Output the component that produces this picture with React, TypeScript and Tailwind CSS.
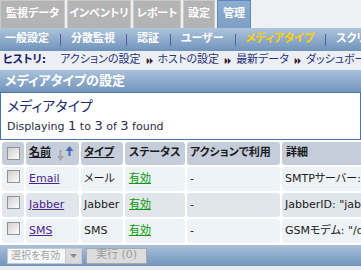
import { Fragment } from 'react';

const font = "font-['DejaVu_Sans','Noto_Sans_CJK_JP',sans-serif] [font-feature-settings:'palt']";

const tabs = [
  { label: '監視データ', w: 'w-[65px]' },
  { label: 'インベントリ', w: 'w-[64px]' },
  { label: 'レポート', w: 'w-[48px]' },
  { label: '設定', w: 'w-[32px]' },
];

const menu = ['一般設定', '分散監視', '認証', 'ユーザー', 'メディアタイプ', 'スクリプト'];

const history = ['アクションの設定', 'ホストの設定', '最新データ', 'ダッシュボード', 'アクションの設定'];

const rows = [
  { name: 'Email', type: 'メール', detail: 'SMTPサーバー: "localhost", SMTP helo: "localhost"', bg: 'bg-[#eef3f7]' },
  { name: 'Jabber', type: 'Jabber', detail: 'JabberID: "jabber@company.com"', bg: 'bg-[#e1e5ec]' },
  { name: 'SMS', type: 'SMS', detail: 'GSMモデム: "/dev/ttyS0"', bg: 'bg-[#eef3f7]' },
];

function Checkbox() {
  return (
    <span className="block w-[13px] h-[13px] border border-[#929292] bg-gradient-to-br from-[#cfcfcf] to-[#fcfcfc]" />
  );
}

function Raquo() {
  return (
    <svg width="7" height="6" viewBox="0 0 7 6" className="mx-[5px] shrink-0">
      <path d="M0 0l3 3-3 3z" fill="#f0a040" />
      <path d="M1 0l3 3-3 3z" fill="#1c2a7a" />
      <path d="M3 0l3 3-3 3z" fill="#f0a040" />
      <path d="M4 0l3 3-3 3z" fill="#1c2a7a" />
    </svg>
  );
}

function SortIcon() {
  return (
    <svg width="17" height="16" viewBox="0 0 17 16" className="ml-[6px]">
      <rect x="2.5" y="4" width="2" height="7" fill="#a6a6a6" />
      <path d="M0 10h7l-3.5 5z" fill="#a6a6a6" />
      <rect x="11.5" y="4" width="2" height="6" fill="#3f70b6" />
      <path d="M8.5 5h8l-4-5z" fill="#3f70b6" />
    </svg>
  );
}

export default function App() {
  return (
    <div className={`w-[361px] h-[270px] overflow-hidden bg-[#e8ebf0] ${font}`}>
      {/* main tabs */}
      <div className="flex h-[28px] gap-[2px] bg-[#eef0f3]">
        {tabs.map((t) => (
          <div
            key={t.label}
            className={`${t.w} flex items-center justify-center bg-[#b4b4b4] border border-b-0 border-[#c9c9c9] text-white font-bold text-[11px] whitespace-nowrap`}
          >
            {t.label}
          </div>
        ))}
        <div className="w-[34px] flex items-center justify-center bg-gradient-to-b from-[#8eacd0] to-[#7e9fc6] border border-b-0 border-[#5a8ac2] text-white font-bold text-[11px]">
          管理
        </div>
      </div>

      {/* sub menu */}
      <div className="flex items-center h-[23px] pl-[5px] bg-gradient-to-b from-[#aec4dc] to-[#7093bb] text-white font-bold text-[11px] whitespace-nowrap">
        {menu.map((m, i) => (
          <Fragment key={m}>
            {i > 0 && <span className="ml-[11px] mr-[10px] w-px h-[12px] bg-[#5d5da5] shrink-0" />}
            <span className={i === 4 ? 'text-[#ffd000]' : ''}>{m}</span>
          </Fragment>
        ))}
      </div>

      {/* history */}
      <div className="flex items-center h-[19px] pl-[3px] bg-[#eceff4] text-[11px] text-[#26327c] whitespace-nowrap">
        <span className="font-bold text-[#1a1a6e] mr-[14px]">ヒストリ:</span>
        {history.map((h, i) => (
          <Fragment key={i}>
            {i > 0 && <Raquo />}
            <span>{h}</span>
          </Fragment>
        ))}
      </div>

      {/* page title */}
      <div className="flex items-center h-[22px] pl-[5px] bg-gradient-to-b from-[#aac1da] to-[#7395bd] text-white font-bold text-[13px]">
        メディアタイプの設定
      </div>

      <div className="bg-white">
        <div className="h-[48px] border border-[#4777ae] pl-[6px] pt-[4px]">
          <div className="text-[14px] leading-[18px] text-[#1d2c6c]">メディアタイプ</div>
          <div className="mt-[4px] text-[11px] leading-[14px] text-[#2a2a48] whitespace-nowrap">
            Displaying <span className="text-[13px]">1</span> to <span className="text-[13px]">3</span> of{' '}
            <span className="text-[13px]">3</span> found
          </div>
        </div>

        <table className="w-[520px] table-fixed border-separate border-spacing-[2px] text-[11px] text-[#1a1a1a]">
          <thead>
            <tr>
              <th className="w-[22px] h-[23px] rounded-[3px] bg-[#c4cdd9] pl-[5px] align-middle">
                <Checkbox />
              </th>
              <th className="w-[53px] rounded-[3px] bg-[#c4cdd9] pl-[3px] text-left font-bold">
                <span className="flex items-center">
                  <span className="underline">名前</span>
                  <SortIcon />
                </span>
              </th>
              <th className="w-[42px] rounded-[3px] bg-[#c4cdd9] pl-[3px] text-left font-bold">
                <span className="underline">タイプ</span>
              </th>
              <th className="w-[60px] rounded-[3px] bg-[#c4cdd9] pl-[4px] text-left font-bold whitespace-nowrap">ステータス</th>
              <th className="w-[93px] rounded-[3px] bg-[#c4cdd9] pl-[3px] text-left font-bold whitespace-nowrap">アクションで利用</th>
              <th className="rounded-[3px] bg-[#c4cdd9] pl-[4px] text-left font-bold">詳細</th>
            </tr>
          </thead>
          <tbody>
            {rows.map((r) => (
              <tr key={r.name}>
                <td className={`h-[24px] rounded-[3px] ${r.bg} pl-[5px] align-top pt-[3px]`}>
                  <Checkbox />
                </td>
                <td className={`rounded-[3px] ${r.bg} pl-[3px]`}>
                  <a className="text-[#4a2590] underline">{r.name}</a>
                </td>
                <td className={`rounded-[3px] ${r.bg} pl-[3px]`}>{r.type}</td>
                <td className={`rounded-[3px] ${r.bg} pl-[4px]`}>
                  <a className="text-[#0b9a0b] underline">有効</a>
                </td>
                <td className={`rounded-[3px] ${r.bg} pl-[3px]`}>-</td>
                <td className={`rounded-[3px] ${r.bg} pl-[3px] whitespace-nowrap overflow-hidden`}>{r.detail}</td>
              </tr>
            ))}
          </tbody>
        </table>
      </div>

      {/* footer actions */}
      <div className="flex items-center h-[21px] pl-[7px] gap-[4px] bg-gradient-to-b from-[#a9c0d9] to-[#7195bd]">
        <div className="flex h-[16px] w-[75px] border border-[#c2cad4] bg-[#f7f8fa]">
          <span className="flex-1 min-w-0 pl-[3px] text-[10px] leading-[14px] text-[#a3a3a3] whitespace-nowrap overflow-hidden">選択を有効</span>
          <span className="w-[16px] shrink-0 flex items-center justify-center bg-[#dadada] border-l border-[#c8c8c8]">
            <svg width="7" height="4" viewBox="0 0 7 4">
              <path d="M0 0h7l-3.5 4z" fill="#8a8a8a" />
            </svg>
          </span>
        </div>
        <div className="flex items-center justify-center h-[16px] w-[61px] border border-[#a9a9a9] bg-[#dcdcdc] text-[11px] text-[#9c9c9c] whitespace-nowrap">
          実行 (0)
        </div>
      </div>
    </div>
  );
}
